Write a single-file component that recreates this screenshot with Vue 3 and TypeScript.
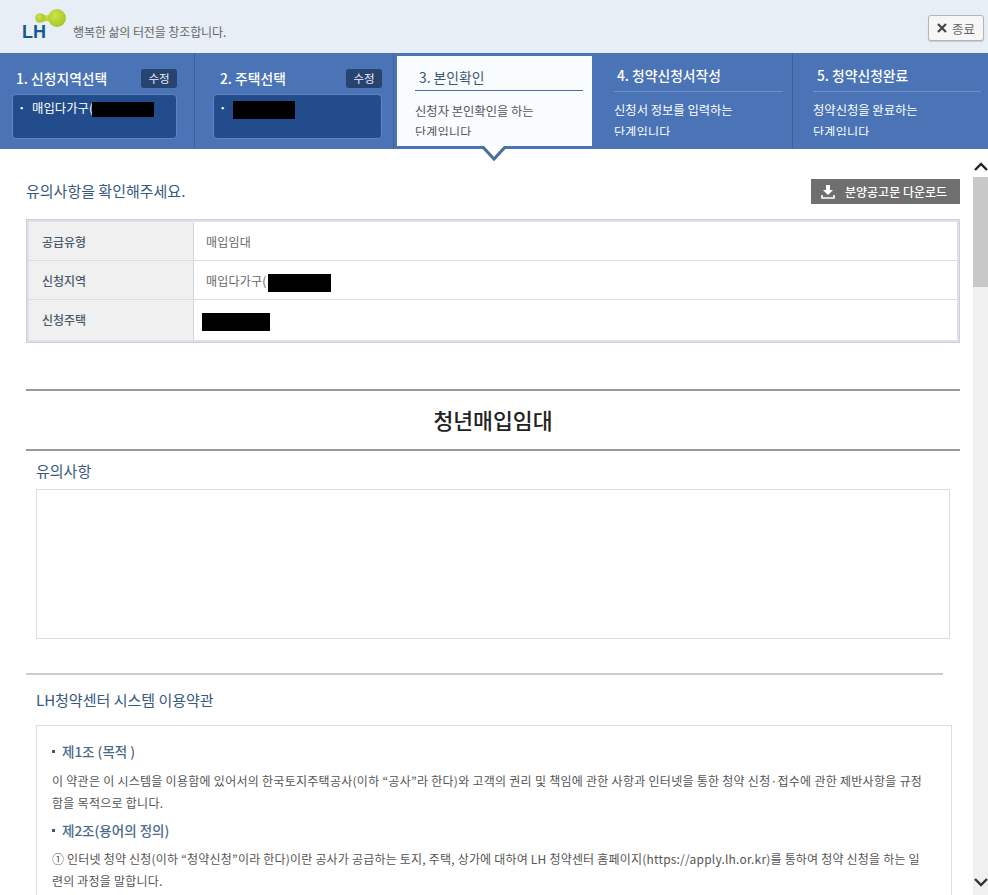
<script setup lang="ts">
interface Step { no: string; desc: string[] }
const laterSteps: Step[] = [
  { no: '4. 청약신청서작성', desc: ['신청서 정보를 입력하는', '단계입니다'] },
  { no: '5. 청약신청완료', desc: ['청약신청을 완료하는', '단계입니다'] },
]
</script>

<template>
  <div class="page">
    <header class="top">
      <div class="logo">
        <svg class="logo-mark" width="46" height="26" viewBox="0 0 46 26">
          <defs>
            <radialGradient id="g" cx="0.4" cy="0.35" r="0.8">
              <stop offset="0" stop-color="#cfe04a" />
              <stop offset="1" stop-color="#9cc31f" />
            </radialGradient>
          </defs>
          <path d="M16 6 Q23 10 30 2 L32 18 Q24 11 16 14 Z" fill="url(#g)" />
          <circle cx="14" cy="10" r="4.8" fill="url(#g)" />
          <circle cx="31" cy="10" r="9" fill="url(#g)" />
        </svg>
        <span class="lh">LH</span>
      </div>
      <span class="slogan">행복한 삶의 터전을 창조합니다.</span>
      <button class="close">
        <svg width="10" height="10" viewBox="0 0 10 10"><path d="M1 1 L9 9 M9 1 L1 9" stroke="#444" stroke-width="2.2" fill="none" /></svg>
        <span>종료</span>
      </button>
    </header>

    <nav class="steps">
      <section class="step done first">
        <div class="done-head"><strong>1. 신청지역선택</strong><span class="edit">수정</span></div>
        <div class="picked"><span class="dot">·</span><span>매입다가구(</span><i class="mask m1"></i></div>
      </section>
      <section class="step done second">
        <div class="done-head"><strong>2. 주택선택</strong><span class="edit">수정</span></div>
        <div class="picked"><span class="dot">·</span><i class="mask m2"></i></div>
      </section>
      <section class="step active">
        <h3>3. 본인확인</h3>
        <p>신청자 본인확인을 하는</p>
        <p class="clip">단계입니다</p>
        <svg class="pointer" width="26" height="16" viewBox="0 0 26 16">
          <path d="M1 0 L13 14 L25 0 Z" fill="#fff" />
          <path d="M1 0 L13 13 L25 0" fill="none" stroke="#4a6d99" stroke-width="3" />
        </svg>
      </section>
      <section v-for="s in laterSteps" :key="s.no" class="step later">
        <h3>{{ s.no }}</h3>
        <p>{{ s.desc[0] }}</p>
        <p class="clip">{{ s.desc[1] }}</p>
      </section>
    </nav>

    <div class="body">
      <main class="content">
        <div class="title-row">
          <h2>유의사항을 확인해주세요.</h2>
          <button class="download">
            <svg width="14" height="14" viewBox="0 0 14 14">
              <path d="M5 0 H9 V5 H12 L7 10 L2 5 H5 Z" fill="#fff" />
              <path d="M1 10 V13 H13 V10" fill="none" stroke="#fff" stroke-width="1.6" />
            </svg>
            분양공고문 다운로드
          </button>
        </div>

        <div class="info">
          <div class="row"><div class="th">공급유형</div><div class="td">매입임대</div></div>
          <div class="row"><div class="th">신청지역</div><div class="td">매입다가구(<i class="mask m3"></i></div></div>
          <div class="row"><div class="th">신청주택</div><div class="td house"><i class="mask m4"></i></div></div>
        </div>

        <h1 class="headline">청년매입임대</h1>

        <h4 class="sub notice-h">유의사항</h4>
        <div class="empty-box"></div>

        <hr class="rule" />

        <h4 class="sub terms-h">LH청약센터 시스템 이용약관</h4>
        <div class="terms">
          <h5>제1조 (목적 )</h5>
          <p class="first-p">이 약관은 이 시스템을 이용함에 있어서의 한국토지주택공사(이하 “공사”라 한다)와 고객의 권리 및 책임에 관한 사항과 인터넷을 통한 청약 신청·접수에 관한 제반사항을 규정함을 목적으로 합니다.</p>
          <h5>제2조(용어의 정의)</h5>
          <p>① 인터넷 청약 신청(이하 “청약신청”이라 한다)이란 공사가 공급하는 토지, 주택, 상가에 대하여 LH 청약센터 홈페이지(https://apply.lh.or.kr)를 통하여 청약 신청을 하는 일련의 과정을 말합니다.</p>
        </div>
      </main>

      <aside class="scrollbar">
        <svg class="arrow" width="15" height="17" viewBox="0 0 15 17"><path d="M2 10 L8 4 L14 10" fill="none" stroke="#222" stroke-width="2.4" /></svg>
        <div class="thumb"></div>
        <div class="track"></div>
        <svg class="arrow down" width="15" height="17" viewBox="0 0 15 17"><path d="M2 6 L8 12 L14 6" fill="none" stroke="#333" stroke-width="2.4" /></svg>
      </aside>
    </div>
  </div>
</template>

<style>
html, body { margin: 0; background: #fff; overflow: hidden; }
</style>

<style scoped>
.page {
  width: 988px;
  height: 895px;
  overflow: hidden;
  display: flex;
  flex-direction: column;
  font-family: "Noto Sans CJK KR", "Noto Sans", sans-serif;
  font-size: 12px;
  color: #555;
}
h1, h2, h3, h4, h5, p { margin: 0; font-weight: 400; }

.top {
  height: 53px;
  flex: none;
  background: #e8eef5;
  display: flex;
  align-items: flex-start;
  box-sizing: border-box;
}
.logo { position: relative; width: 73px; height: 53px; flex: none; }
.logo-mark { position: absolute; left: 26px; top: 8px; }
.lh {
  position: absolute;
  left: 22px;
  top: 23px;
  font: 700 18px/18px "Liberation Sans", sans-serif;
  color: #14598f;
}
.slogan { margin-top: 23px; line-height: 18px; color: #666; font-size: 12px; letter-spacing: -0.1px; }
.close {
  margin: 15px 4px 0 auto;
  width: 56px;
  height: 26px;
  padding: 0 0 0 8px;
  background: #f6f6f6;
  border: 1px solid #b5b5b5;
  border-radius: 3px;
  font: 12.5px "Noto Sans CJK KR", sans-serif;
  color: #666;
  box-shadow: 0 1px 1px rgba(0,0,0,.15);
  display: flex;
  align-items: center;
  gap: 5px;
}

.steps {
  height: 96px;
  flex: none;
  background: #4a74b5;
  display: flex;
  color: #fff;
  position: relative;
  z-index: 1;
}
.step { box-sizing: border-box; flex: none; position: relative; }
.done { border-right: 1px solid #3b619c; padding: 15px 0 0 12px; }
.first { width: 195px; padding-right: 17px; }
.second { width: 199px; padding-left: 18px; padding-right: 11px; }
.done-head { display: flex; justify-content: space-between; align-items: center; padding-left: 4px; height: 20px; margin-bottom: 6px; }
.done-head strong { font-size: 13.8px; font-weight: 500; color: #fff; line-height: 20px; }
.second .done-head { padding-left: 7px; }
.edit {
  width: 36px;
  height: 19px;
  background: #27436f;
  border-radius: 3px;
  font-size: 11.5px;
  line-height: 18px;
  text-align: center;
  color: #eef;
}
.picked {
  height: 45px;
  box-sizing: border-box;
  background: #234c8c;
  border: 1px solid #5f86bd;
  border-radius: 4px;
  padding: 4px 0 0 5px;
  display: flex;
  align-items: flex-start;
  line-height: 18px;
  font-size: 12.4px;
  color: #fff;
}
.dot { width: 14px; font-weight: 700; }
.mask { display: inline-block; background: #000; flex: none; }
.m1 { width: 62px; height: 15px; margin-top: 3px; margin-left: -1px; }
.m2 { width: 62px; height: 18px; margin-top: 2px; }
.m3 { width: 63px; height: 18px; vertical-align: middle; margin-left: 2px; }
.m4 { width: 68px; height: 18px; margin-left: -4px; margin-top: 13px; display: block; }

.active {
  width: 195px;
  height: 90px;
  margin: 3px 0 3px 3px;
  background: #f8fcff;
  color: #555;
  padding: 10px 9px 0 18px;
}
.step h3 { font-size: 13.8px; line-height: 22px; }
.active h3 {
  padding: 0 0 0 4px;
  border-bottom: 1px solid #4a6d99;
  box-sizing: border-box;
  height: 25px;
  font-weight: 400;
  color: #3d566f;
}
.step p { font-size: 12.3px; line-height: 21px; white-space: nowrap; }
.active p:first-of-type { margin-top: 10px; }
.later { width: 201px; padding: 11px 9px 0 22px; overflow: hidden; height: 96px; border-right: 1px solid #3b619c; }
.later:last-child { width: 195px; padding: 11px 7px 0 20px; border-right: 0; }
.later h3 { font-weight: 500; height: 28px; border-bottom: 1px solid #6d90c6; box-sizing: border-box; padding-left: 3px; }
.later:last-child h3 { padding-left: 4px; }
.later p:first-of-type { margin-top: 8px; }
.step .clip { height: 11px; overflow: hidden; line-height: 14px; font-size: 12px; letter-spacing: 0.3px; margin-top: 3px; }
.later .clip { margin-top: 4px; color: #fff; }
.pointer { position: absolute; left: 84px; top: 90px; }

.body { flex: 1; min-height: 0; display: flex; }
.content { flex: 1; min-width: 0; padding: 0 13px 0 26px; overflow: hidden; }
.title-row { display: flex; justify-content: space-between; align-items: center; margin-top: 30px; height: 25px; }
.title-row h2 { font-size: 15px; line-height: 23px; margin-bottom: 2px; color: #36597d; }
.download {
  width: 149px;
  height: 25px;
  padding: 0 0 0 10px;
  background: #6f6f6f;
  border: 0;
  color: #fff;
  font: 500 12px "Noto Sans CJK KR", sans-serif;
  display: flex;
  align-items: center;
  gap: 10px;
}
.info { margin-top: 15px; height: 124px; box-sizing: border-box; border: 3px solid #e0e0ec; outline: 1px solid #d0d0d6; outline-offset: -1px; }
.row { display: flex; height: 39px; border-bottom: 1px solid #ddd; box-sizing: border-box; }
.row:last-child { border-bottom: 0; height: 40px; }
.th { width: 165px; box-sizing: border-box; padding-left: 13px; background: #f0f0f0; border-right: 1px solid #d5d5de; line-height: 40px; color: #4a5a6a; font-weight: 500; }
.td { padding-left: 12px; line-height: 40px; color: #666; letter-spacing: 0.2px; }
.headline {
  margin-top: 46px;
  height: 62px;
  box-sizing: border-box;
  border-top: 2px solid #999;
  border-bottom: 2px solid #999;
  text-align: center;
  font-size: 21.6px;
  font-weight: 500;
  line-height: 58px;
  color: #222;
}
.sub { font-size: 15px; line-height: 22px; color: #36597d; padding-left: 10px; }
.notice-h { margin-top: 9px; }
.empty-box { margin: 7px 10px 0; height: 150px; box-sizing: border-box; border: 1px solid #ddd; }
.rule { margin: 34px 17px 0 0; border: 0; height: 2px; background: #ccc; }
.terms-h { margin-top: 14px; }
.terms { margin: 14px 8px 0 10px; border: 1px solid #ddd; padding: 15px 15px 0; height: 400px; box-sizing: border-box; }
.terms h5 { font-size: 13.5px; line-height: 20px; color: #4a6a8a; position: relative; padding-left: 10px; font-weight: 500; }
.terms h5::before { content: ""; position: absolute; left: 0; top: 9px; width: 3px; height: 3px; background: #36597d; }
.terms p { font-size: 12px; letter-spacing: 0.2px; line-height: 22px; color: #555; margin: 8px 0 6px; word-break: break-all; padding-right: 5px; }
.terms .first-p { margin-top: 9px; letter-spacing: 0.27px; }

.scrollbar { width: 15px; flex: none; margin-top: 11px; background: #f0f0f0; display: flex; flex-direction: column; }
.arrow { display: block; flex: none; background: #fff; }
.arrow.down { background: transparent; margin-bottom: 5px; }
.thumb { height: 110px; flex: none; background: #c8c8c8; }
.track { flex: 1; }
</style>
